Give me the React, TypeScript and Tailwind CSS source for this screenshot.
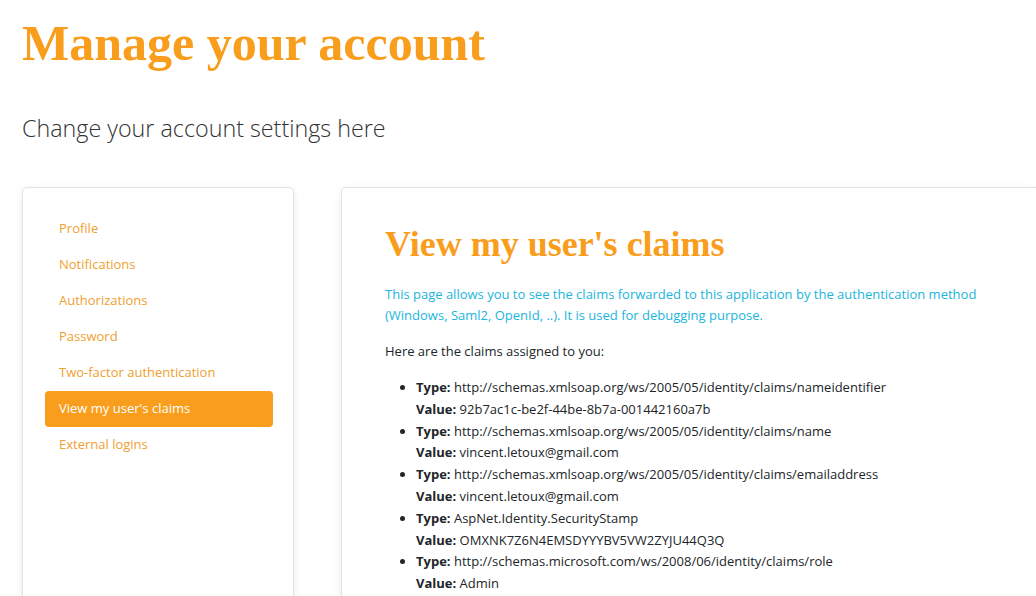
import React from "react";

const nav = [
  "Profile",
  "Notifications",
  "Authorizations",
  "Password",
  "Two-factor authentication",
  "View my user's claims",
  "External logins",
];

const claims = [
  ["http://schemas.xmlsoap.org/ws/2005/05/identity/claims/nameidentifier", "92b7ac1c-be2f-44be-8b7a-001442160a7b"],
  ["http://schemas.xmlsoap.org/ws/2005/05/identity/claims/name", "vincent.letoux@gmail.com"],
  ["http://schemas.xmlsoap.org/ws/2005/05/identity/claims/emailaddress", "vincent.letoux@gmail.com"],
  ["AspNet.Identity.SecurityStamp", "OMXNK7Z6N4EMSDYYYBV5VW2ZYJU44Q3Q"],
  ["http://schemas.microsoft.com/ws/2008/06/identity/claims/role", "Admin"],
];

export default function App() {
  return (
    <div className="w-[1036px] h-[596px] overflow-hidden bg-white font-['Open_Sans',sans-serif] text-[#212529]">
      <div className="pl-[22px] pt-[13px]">
        <h1 className="font-['Liberation_Serif',serif] font-bold text-[50px] leading-[60px] text-[#f99d1c]">
          Manage your account
        </h1>
        <p className="mt-[40px] text-[23.3px] font-light leading-[30px] text-[#333]">
          Change your account settings here
        </p>
      </div>
      <div className="flex gap-[47px] pl-[22px] mt-[44px]">
        <div className="w-[272px] shrink-0 h-[460px] rounded-[5px] border border-[#e3e3e3] shadow-[0_2px_8px_rgba(0,0,0,0.08)] bg-white pl-[22px] pr-[20px] pt-[23px]">
          <ul className="flex flex-col">
            {nav.map((n) => {
              const active = n === "View my user's claims";
              return (
                <li
                  key={n}
                  className={
                    "h-[36px] flex items-center px-[14px] text-[13px] rounded-[4px] " +
                    (active ? "bg-[#f99d1c] text-white" : "text-[#f0a030]")
                  }
                >
                  {n}
                </li>
              );
            })}
          </ul>
        </div>
        <div className="flex-1 h-[460px] rounded-l-[5px] border border-r-0 border-[#e3e3e3] shadow-[0_2px_8px_rgba(0,0,0,0.08)] bg-white pl-[43px] pt-[34px]">
          <h2 className="font-['Liberation_Serif',serif] font-bold text-[36px] leading-[44px] text-[#f99d1c]">
            View my user's claims
          </h2>
          <p className="mt-[18px] text-[13px] leading-[21px] text-[#1bb5dc] w-[620px]">
            This page allows you to see the claims forwarded to this application by the authentication method (Windows, Saml2, OpenId, ..). It is used for debugging purpose.
          </p>
          <p className="mt-[15px] text-[13px] leading-[21px]">Here are the claims assigned to you:</p>
          <ul className="mt-[15px] pl-[31px] list-disc text-[13px] leading-[21.8px]">
            {claims.map(([t, v]) => (
              <li key={t}>
                <b className="font-bold">Type:</b> {t}
                <br />
                <b className="font-bold">Value:</b> {v}
              </li>
            ))}
          </ul>
        </div>
      </div>
    </div>
  );
}
